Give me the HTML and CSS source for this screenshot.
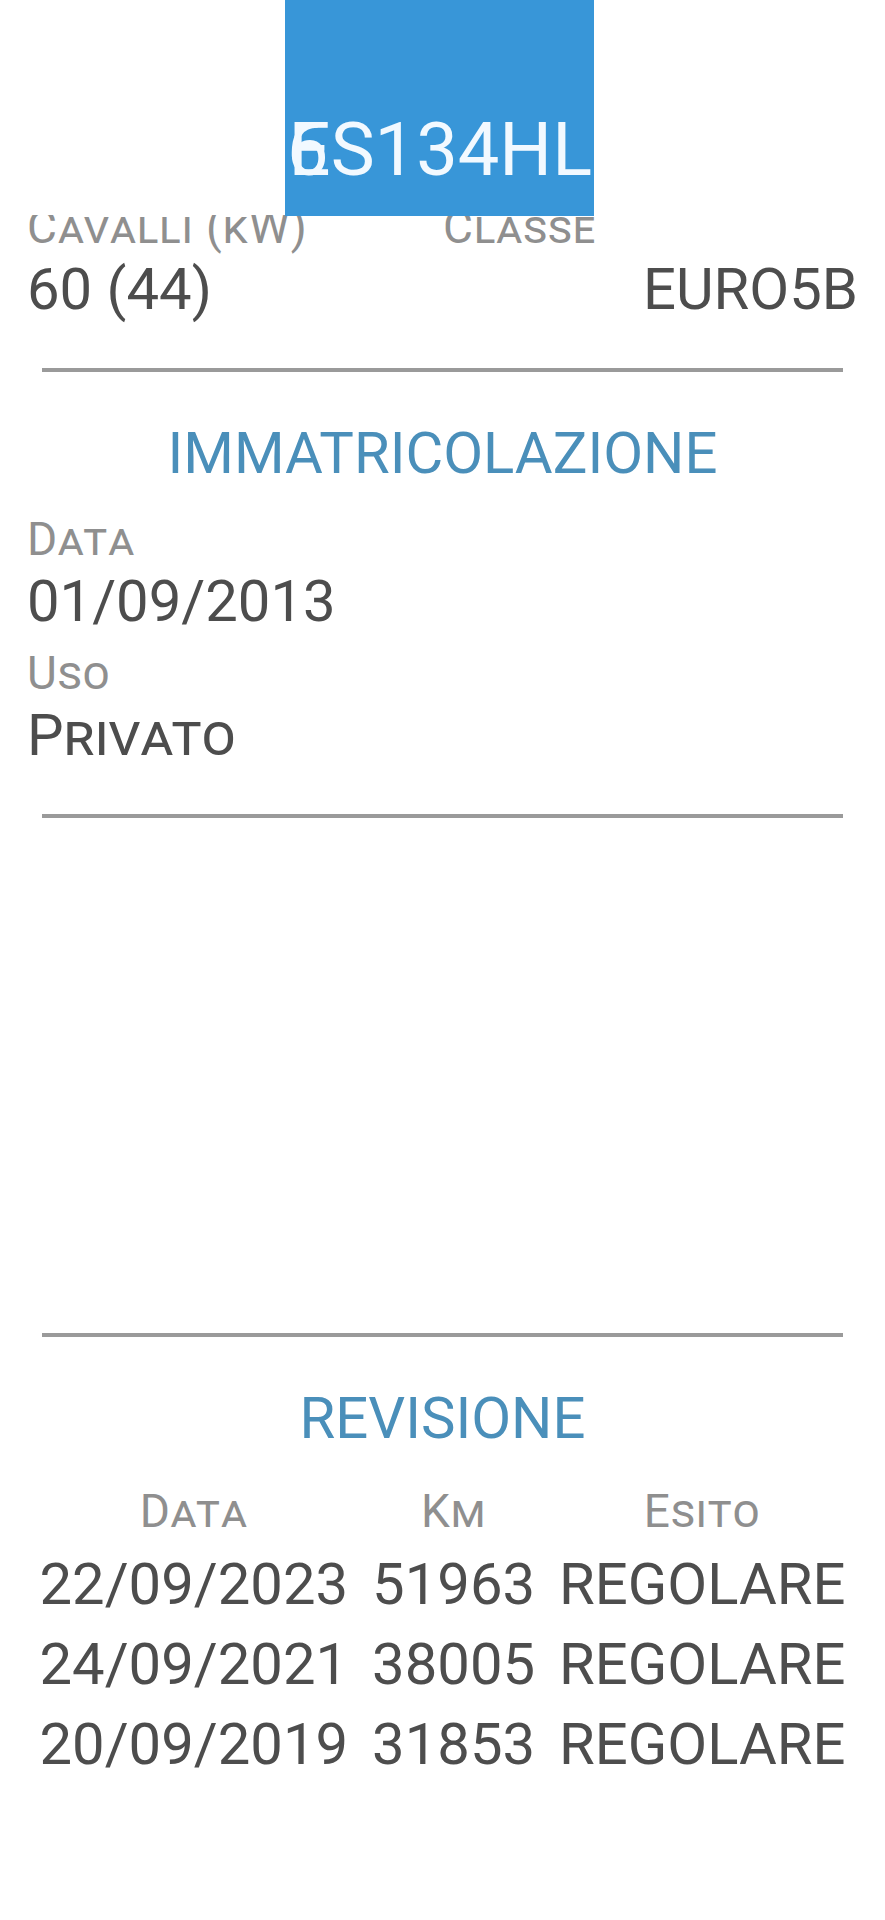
FILE: index.html
```html
<!DOCTYPE html>
<html lang="it">
<head>
  <meta charset="UTF-8">
  <meta name="viewport" content="width=device-width, initial-scale=1.0">
  <title>Dettaglio veicolo</title>
  <link rel="stylesheet" href="styles.css">
</head>
<body>
  <!-- Plate header, overlays the scrolled content -->
  <div class="plate-bar">
    <div class="plate">
      <span class="plate-ghost">6</span>
      <span class="plate-text">ES134HL</span>
    </div>
  </div>

  <div class="page">
    <!-- Motore -->
    <div class="pair">
      <div class="field">
        <div class="label">Cavalli (kW)</div>
        <div class="value">60 (44)</div>
      </div>
      <div class="field field-right">
        <div class="label">Classe</div>
        <div class="value">EURO5B</div>
      </div>
    </div>

    <hr class="divider">

    <!-- Immatricolazione -->
    <h2 class="section-title">IMMATRICOLAZIONE</h2>
    <div class="stack">
      <div class="field">
        <div class="label">Data</div>
        <div class="value">01/09/2013</div>
      </div>
      <div class="field">
        <div class="label">Uso</div>
        <div class="value caps">Privato</div>
      </div>
    </div>

    <hr class="divider">

    <div class="spacer"></div>

    <hr class="divider">

    <!-- Revisione -->
    <h2 class="section-title">REVISIONE</h2>
    <div class="table">
      <div class="th">Data</div>
      <div class="th">Km</div>
      <div class="th">Esito</div>

      <div class="td">22/09/2023</div>
      <div class="td">51963</div>
      <div class="td">REGOLARE</div>

      <div class="td">24/09/2021</div>
      <div class="td">38005</div>
      <div class="td">REGOLARE</div>

      <div class="td">20/09/2019</div>
      <div class="td">31853</div>
      <div class="td">REGOLARE</div>
    </div>
  </div>
</body>
</html>
```

FILE: styles.css
```css
body {
  margin: 0;
  background-color: #fff;
  font-family: Roboto, "Liberation Sans", sans-serif;
  color: #4d4d4d;
}

/* header with the plate */
.plate-bar {
  position: absolute;
  top: 0;
  left: 0;
  right: 0;
  height: 215px;
  background-color: #fff;
  z-index: 2;
}

.plate {
  position: relative;
  margin-left: 285px;
  width: 309px;
  height: 216px;
  background-color: #3896d8;
  display: flex;
  justify-content: flex-end;
  align-items: flex-end;
  padding-bottom: 29px;
  box-sizing: border-box;
  overflow: hidden;
}

.plate-text {
  font-size: 74px;
  line-height: 74px;
  color: #f2f9ff;
  padding-right: 2px;
}

.plate-ghost {
  position: absolute;
  left: 2px;
  bottom: 29px;
  font-size: 74px;
  line-height: 74px;
  color: #f2f9ff;
}

.page {
  padding: 197px 27px 0;
}

.pair {
  display: grid;
  grid-template-columns: 416px 1fr;
}

.field-right .value {
  text-align: right;
}

.stack {
  display: flex;
  flex-direction: column;
  gap: 10px;
}

.label {
  font-size: 46px;
  line-height: 60px;
  font-variant: small-caps;
  letter-spacing: 1px;
  color: #8f8f8f;
}

.value {
  font-size: 58px;
  line-height: 64px;
  color: #4d4d4d;
}

.caps {
  font-variant: small-caps;
}

.divider {
  border: 0;
  height: 4px;
  background-color: #9a9a9a;
  margin: 47px 15px 41px;
}

.section-title {
  margin: 0 0 16px;
  font-size: 58px;
  line-height: 80px;
  font-weight: normal;
  text-align: center;
  color: #4a8fba;
}

.spacer {
  height: 427px;
}

.table {
  display: grid;
  grid-template-columns: auto auto auto;
  justify-content: center;
  justify-items: center;
  column-gap: 24px;
  margin-top: 21px;
  margin-left: -27px;
  margin-right: -27px;
}

.th {
  font-size: 46px;
  line-height: 65px;
  font-variant: small-caps;
  letter-spacing: 1px;
  color: #8f8f8f;
}

.td {
  font-size: 58px;
  line-height: 80px;
  color: #4d4d4d;
}
```
